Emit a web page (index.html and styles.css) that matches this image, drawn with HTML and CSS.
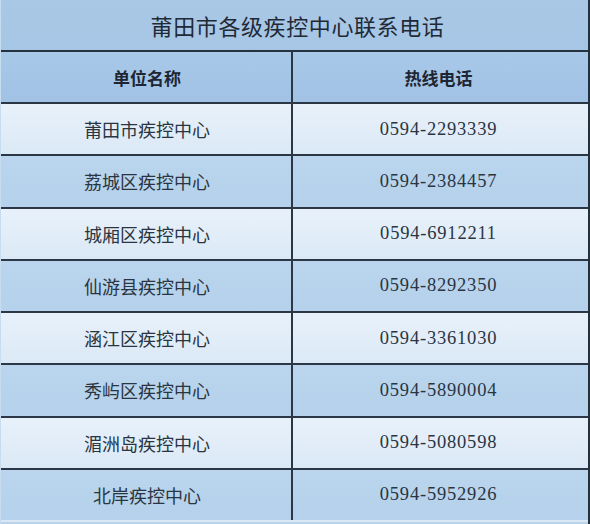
FILE: index.html
```html
<!DOCTYPE html>
<html lang="zh-CN">
<head>
<meta charset="utf-8">
<title>莆田市各级疾控中心联系电话</title>
<link rel="stylesheet" href="styles.css">
</head>
<body>
<div class="sheet">
  <div class="title">莆田市各级疾控中心联系电话</div>
  <div class="row head">
    <div class="cell name">单位名称</div>
    <div class="cell tel">热线电话</div>
  </div>
  <div class="row body light"><div class="cell name">莆田市疾控中心</div><div class="cell tel num">0594-2293339</div></div>
  <div class="row body mid"><div class="cell name">荔城区疾控中心</div><div class="cell tel num">0594-2384457</div></div>
  <div class="row body light"><div class="cell name">城厢区疾控中心</div><div class="cell tel num">0594-6912211</div></div>
  <div class="row body mid"><div class="cell name">仙游县疾控中心</div><div class="cell tel num">0594-8292350</div></div>
  <div class="row body light"><div class="cell name">涵江区疾控中心</div><div class="cell tel num">0594-3361030</div></div>
  <div class="row body mid"><div class="cell name">秀屿区疾控中心</div><div class="cell tel num">0594-5890004</div></div>
  <div class="row body light"><div class="cell name">湄洲岛疾控中心</div><div class="cell tel num">0594-5080598</div></div>
  <div class="row body mid last"><div class="cell name">北岸疾控中心</div><div class="cell tel num">0594-5952926</div></div>
</div>
</body>
</html>
```
FILE: styles.css
```css
html, body {
  margin: 0;
  padding: 0;
  background: #b8d3ec;
}
.sheet {
  width: 590px;
  height: 524px;
  border-right: 2px solid #24303c;
  border-left: 1px solid #c8dcef;
  box-sizing: border-box;
  display: flex;
  flex-direction: column;
  font-family: "Noto Sans CJK SC", "Noto Sans", sans-serif;
  color: #2a3542;
  overflow: hidden;
}
.title {
  flex: none;
  height: 50px;
  border-bottom: 2px solid #26323e;
  background: linear-gradient(180deg, #a9c8e6 0%, #a6c6e5 100%);
  display: flex;
  align-items: center;
  justify-content: center;
  font-size: 22px;
  letter-spacing: 0.6px;
  color: #1f2a36;
  padding-left: 6px;
}
.row {
  flex: none;
  display: grid;
  grid-template-columns: 292px 1fr;
  height: 50px;
  border-bottom: 2px solid #2b3744;
}
.row.body {
  height: 50.25px;
}
.row.last {
  border-bottom: 2px solid #dbe8f4;
}
.cell {
  display: flex;
  align-items: center;
  justify-content: center;
}
.cell.name {
  border-right: 2px solid #2b3744;
  font-size: 18px;
  padding-left: 2px;
}
.cell.tel {
  padding-right: 4px;
}
.head {
  background: linear-gradient(180deg, #a8c8e8 0%, #a1c2e5 100%);
  color: #1d2632;
}
.head .cell {
  font-size: 17px;
  font-weight: 700;
}
.light {
  background: linear-gradient(180deg, #e8f1fa 0%, #dbe9f6 100%);
}
.mid {
  background: linear-gradient(180deg, #bad5ed 0%, #b5d1eb 100%);
}
.num {
  font-family: "Liberation Serif", "DejaVu Serif", serif;
  font-size: 18.5px;
  letter-spacing: 0.8px;
  color: #2a3542;
}
```
